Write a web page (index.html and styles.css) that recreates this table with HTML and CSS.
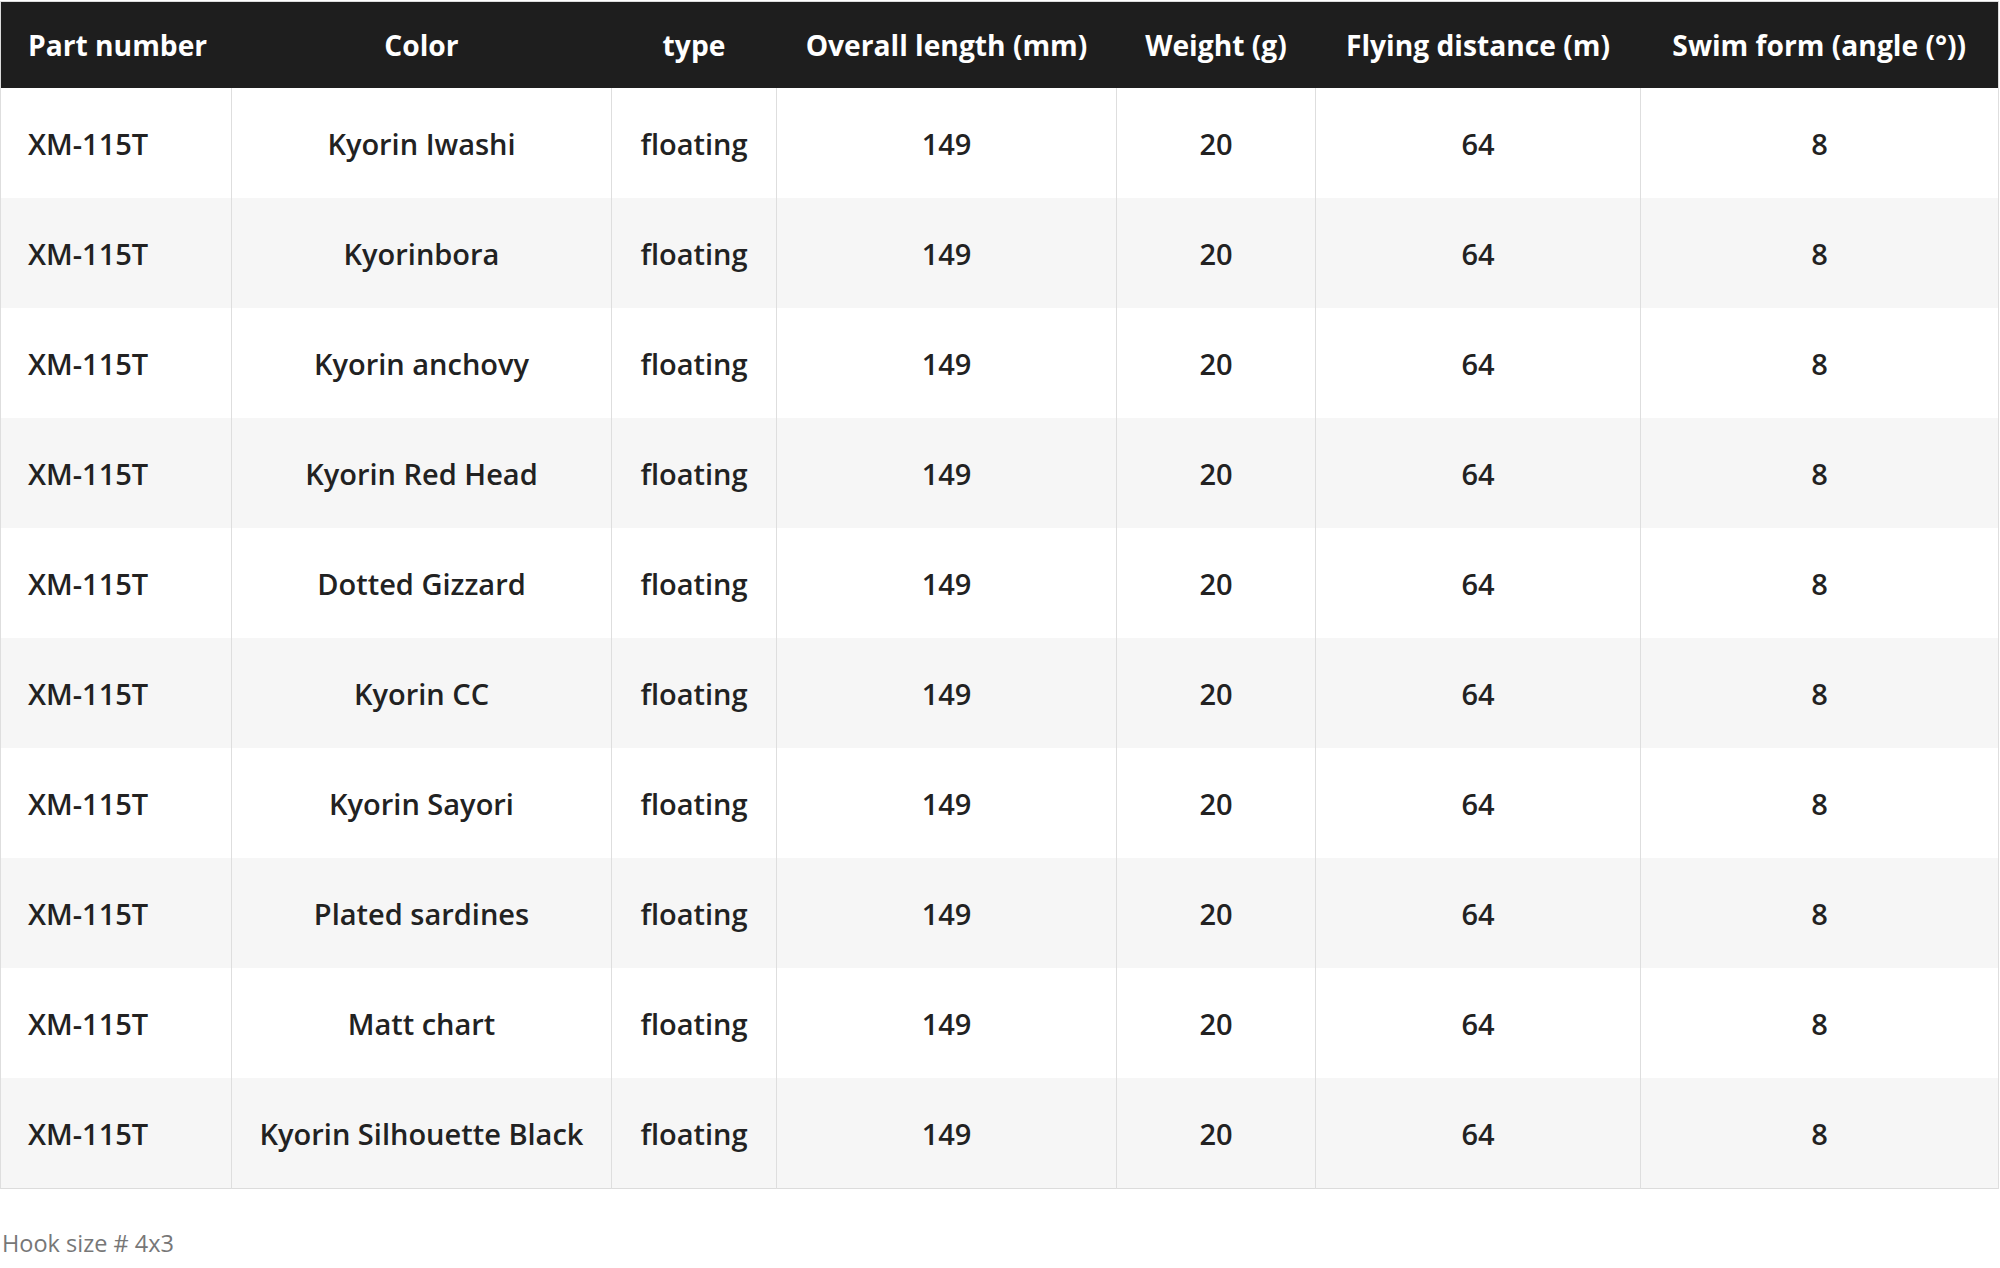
FILE: index.html
```html
<!DOCTYPE html>
<html>
<head>
<meta charset="utf-8">
<link rel="stylesheet" href="styles.css">
</head>
<body>
<table class="spec">
<colgroup>
<col class="c1"><col class="c2"><col class="c3"><col class="c4"><col class="c5"><col class="c6"><col class="c7">
</colgroup>
<thead>
<tr><th class="left">Part number</th><th>Color</th><th>type</th><th>Overall length (mm)</th><th>Weight (g)</th><th>Flying distance (m)</th><th>Swim form (angle (°))</th></tr>
</thead>
<tbody>
<tr><td class="left">XM-115T</td><td>Kyorin Iwashi</td><td>floating</td><td>149</td><td>20</td><td>64</td><td>8</td></tr>
<tr><td class="left">XM-115T</td><td>Kyorinbora</td><td>floating</td><td>149</td><td>20</td><td>64</td><td>8</td></tr>
<tr><td class="left">XM-115T</td><td>Kyorin anchovy</td><td>floating</td><td>149</td><td>20</td><td>64</td><td>8</td></tr>
<tr><td class="left">XM-115T</td><td>Kyorin Red Head</td><td>floating</td><td>149</td><td>20</td><td>64</td><td>8</td></tr>
<tr><td class="left">XM-115T</td><td>Dotted Gizzard</td><td>floating</td><td>149</td><td>20</td><td>64</td><td>8</td></tr>
<tr><td class="left">XM-115T</td><td>Kyorin CC</td><td>floating</td><td>149</td><td>20</td><td>64</td><td>8</td></tr>
<tr><td class="left">XM-115T</td><td>Kyorin Sayori</td><td>floating</td><td>149</td><td>20</td><td>64</td><td>8</td></tr>
<tr><td class="left">XM-115T</td><td>Plated sardines</td><td>floating</td><td>149</td><td>20</td><td>64</td><td>8</td></tr>
<tr><td class="left">XM-115T</td><td>Matt chart</td><td>floating</td><td>149</td><td>20</td><td>64</td><td>8</td></tr>
<tr><td class="left">XM-115T</td><td>Kyorin Silhouette Black</td><td>floating</td><td>149</td><td>20</td><td>64</td><td>8</td></tr>
</tbody>
</table>
<p class="note">Hook size # 4x3</p>
</body>
</html>
```
FILE: styles.css
```css
html, body { margin: 0; padding: 0; background: #fff; }
body { font-family: "Open Sans", Lato, sans-serif; color: #222; }
.spec {
  width: 1999px;
  margin: 1px 0 0 0;
  border-collapse: collapse;
  table-layout: fixed;
  border: 1px solid #dcdcdc;
}
.c1 { width: 231px; } .c2 { width: 380px; } .c3 { width: 165px; }
.c4 { width: 340px; } .c5 { width: 199px; } .c6 { width: 325px; } .c7 { width: 358px; }
.spec th {
  background: #1e1e1e;
  color: #fff;
  height: 86px;
  padding: 0;
  font-size: 28.2px;
  font-weight: 700;
  text-align: center;
  border: 0;
}
.spec td {
  height: 110px;
  padding: 0;
  font-size: 29px;
  font-weight: 600;
  text-align: center;
  border-left: 1px solid #dedede;
  border-right: 1px solid #dedede;
}
.spec tbody tr:nth-child(even) td { background: #f6f6f6; }
.spec th.left, .spec td.left { text-align: left; padding-left: 27px; }
.note {
  margin: 38px 0 0 2px;
  font-size: 23.5px;
  color: #777;
}
```
